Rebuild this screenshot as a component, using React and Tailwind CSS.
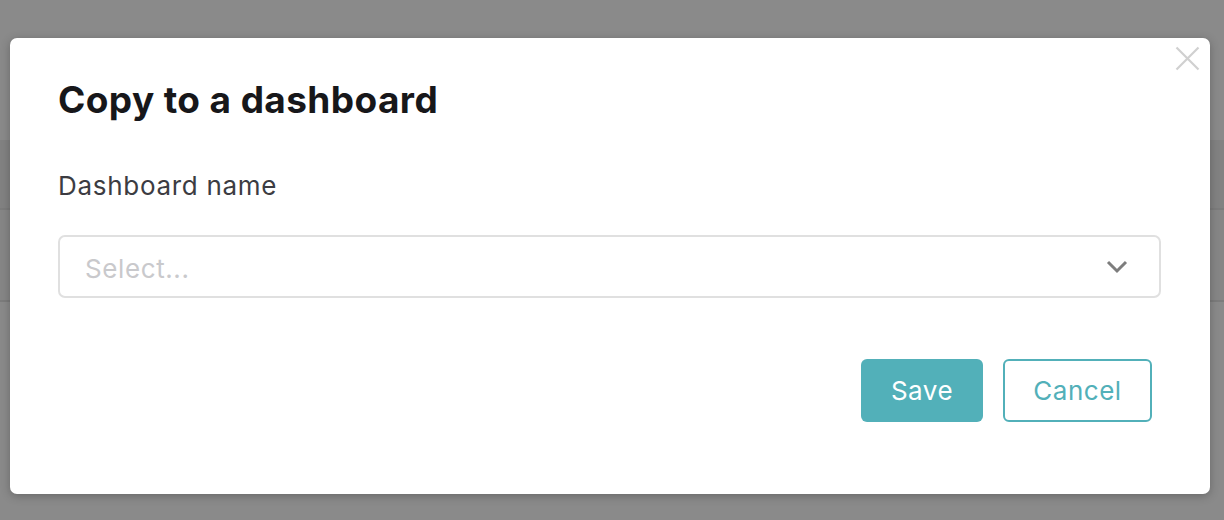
import { useState } from 'react'

export default function App() {
  const [value] = useState(null)

  return (
    <div className="relative h-[520px] w-full overflow-hidden bg-[#8a8a8a]" style={{ fontFamily: 'Inter, "Noto Sans", sans-serif' }}>
      {/* page behind the overlay */}
      <div className="pt-[140px]">
        <div className="h-[70px] bg-[#828282] border-b-2 border-[#7c7c7c]" />
        <div className="h-[92px] bg-[#868686] border-b-2 border-[#7c7c7c]" />
      </div>

      {/* Modal */}
      <div className="absolute left-[10px] top-[38px] w-[1200px] rounded-[7px] bg-white shadow-[0_2px_10px_rgba(0,0,0,0.25)] pl-[48px] pr-[49px] pt-[42px] pb-[72px]">
        <button className="absolute right-[10px] top-[8px] p-0 text-[#d0d0d0]" aria-label="Close">
          <svg width="25" height="25" viewBox="0 0 25 25" fill="none" stroke="currentColor" strokeWidth="2.2">
            <path d="M1.5 1.5 L23.5 23.5 M23.5 1.5 L1.5 23.5" />
          </svg>
        </button>

        <h2 className="text-[37px] leading-[40px] font-bold text-[#17171a] tracking-[0.4px]">Copy to a dashboard</h2>

        <label className="block mt-[50px] text-[26px] leading-[32px] text-[#3c3c42] tracking-[0.7px]">Dashboard name</label>

        <div className="mt-[33px] flex h-[63px] items-center justify-between rounded-[7px] border-2 border-[#e0e0e0] pl-[25px] pr-[31px]">
          <span className="pt-[4px] text-[26px] leading-[32px] tracking-[0.6px] text-[#c9c9cc]">{value || 'Select...'}</span>
          <svg width="22" height="14" viewBox="0 0 22 14" fill="none" stroke="#7d7d7d" strokeWidth="3">
            <path d="M2 2 L11 11 L20 2" />
          </svg>
        </div>

        <div className="mt-[61px] flex justify-end gap-[20px] pr-[9px]">
          <button className="h-[63px] w-[122px] rounded-[6px] bg-[#52b0b9] text-[26px] tracking-[0.5px] text-white">Save</button>
          <button className="h-[63px] w-[149px] rounded-[6px] border-2 border-[#52b0b9] bg-white text-[26px] tracking-[0.5px] text-[#52b0b9]">Cancel</button>
        </div>
      </div>
    </div>
  )
}
